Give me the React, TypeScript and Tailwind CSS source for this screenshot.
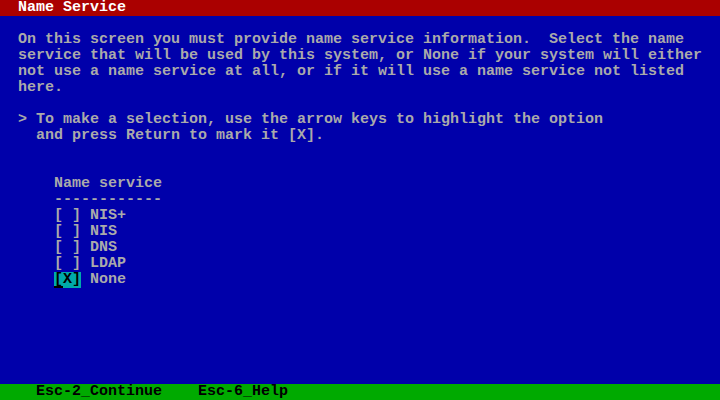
import React from "react";

const lines: string[] = [
  "",
  "  On this screen you must provide name service information.  Select the name",
  "  service that will be used by this system, or None if your system will either",
  "  not use a name service at all, or if it will use a name service not listed",
  "  here.",
  "",
  "  > To make a selection, use the arrow keys to highlight the option",
  "    and press Return to mark it [X].",
  "",
  "",
  "      Name service",
  "      ------------",
  "      [ ] NIS+",
  "      [ ] NIS",
  "      [ ] DNS",
  "      [ ] LDAP",
];

export default function App() {
  return (
    <div
      className="w-[720px] h-[400px] bg-[#0000aa] text-[#aaaaaa] font-bold flex flex-col overflow-hidden"
      style={{ fontFamily: '"Liberation Mono", "DejaVu Sans Mono", monospace', fontSize: "15px" }}
    >
      <div className="h-4 leading-4 whitespace-pre bg-[#aa0000] text-white">
        {"  Name Service"}
      </div>
      {lines.map((l, i) => (
        <div key={i} className="h-4 leading-4 whitespace-pre">
          {l || " "}
        </div>
      ))}
      <div className="h-4 leading-4 whitespace-pre flex">
        <span className="inline-block h-4">{"      "}</span>
        <span className="inline-block h-4 bg-[#00aaaa] text-black">
          <span className="inline-block h-4 shadow-[inset_0_-2px_0_#000]">[</span>
          <span>X]</span>
        </span>
        <span className="inline-block h-4">{" None"}</span>
      </div>
      <div className="flex-1" />
      <div className="h-4 leading-4 whitespace-pre bg-[#00aa00] text-black">
        {"    Esc-2_Continue    Esc-6_Help"}
      </div>
    </div>
  );
}
